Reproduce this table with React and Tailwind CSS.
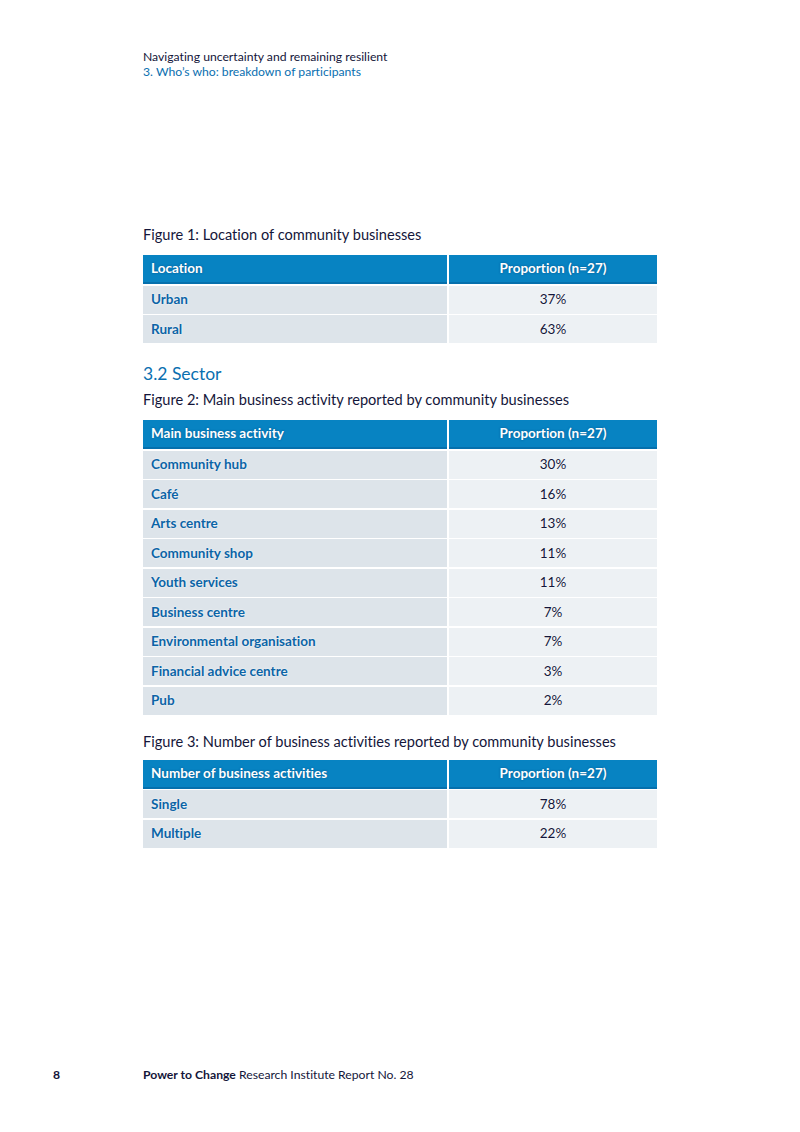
const fig2 = [
  ['Community hub', '30%'],
  ['Café', '16%'],
  ['Arts centre', '13%'],
  ['Community shop', '11%'],
  ['Youth services', '11%'],
  ['Business centre', '7%'],
  ['Environmental organisation', '7%'],
  ['Financial advice centre', '3%'],
  ['Pub', '2%'],
]

const DataTable = ({ head, rows }) => {
  return (
    <div className="flex flex-col gap-[1.5px] w-[514px]">
      <div className="flex gap-[2px] h-[29px]">
        <div className="w-[304px] bg-[#0783c2] border-b-2 border-[#0570ad] flex items-center pl-2 text-white font-bold text-[13.5px] [text-shadow:0_0_2px_rgba(0,40,90,0.5)]">{head}</div>
        <div className="flex-1 bg-[#0783c2] border-b-2 border-[#0570ad] flex items-center justify-center text-white font-bold text-[13.5px] [text-shadow:0_0_2px_rgba(0,40,90,0.5)]">Proportion (n=27)</div>
      </div>
      {rows.map(([label, value]) => (
        <div key={label} className="flex gap-[2px] h-[28px]">
          <div className="w-[304px] bg-[#dde4ea] flex items-center pl-2 text-[#0b64a6] font-bold text-[13.5px] [text-shadow:0_0_2px_white]">{label}</div>
          <div className="flex-1 bg-[#edf1f4] flex items-center justify-center text-[#14163a] text-[13.5px] [text-shadow:0_0_2px_white]">{value}</div>
        </div>
      ))}
    </div>
  )
}

const App = () => {
  return (
    <div className="w-[800px] h-[1132px] bg-white relative font-['Lato',sans-serif] text-[#14163a] [font-variant-ligatures:none]">
      <div className="pl-[143px] pt-[49px] text-[12.2px] leading-[15px]">
        <p>Navigating uncertainty and remaining resilient</p>
        <p className="text-[#0a6fb0]">3. Who’s who: breakdown of participants</p>
      </div>

      <div className="pl-[143px] pt-[147px]">
        <h3 className="text-[14.6px] leading-[18px] mb-[11px]">Figure 1: Location of community businesses</h3>
        <DataTable head="Location" rows={[['Urban', '37%'], ['Rural', '63%']]} />

        <h2 className="text-[17.5px] leading-[22px] text-[#0a6fb0] mt-[20px]">3.2 Sector</h2>
        <h3 className="text-[14.6px] leading-[18px] mt-[6px] mb-[11px]">Figure 2: Main business activity reported by community businesses</h3>
        <DataTable head="Main business activity" rows={fig2} />

        <h3 className="text-[14.6px] leading-[18px] mt-[18px] mb-[9px]">Figure 3: Number of business activities reported by community businesses</h3>
        <DataTable head="Number of business activities" rows={[['Single', '78%'], ['Multiple', '22%']]} />
      </div>

      <div className="absolute left-0 top-[1067px] flex items-center text-[12.2px] leading-[16px]">
        <span className="w-[143px] pl-[53px] font-bold">8</span>
        <span><span className="font-bold">Power to Change</span> Research Institute Report No. 28</span>
      </div>
    </div>
  )
}

export default App
